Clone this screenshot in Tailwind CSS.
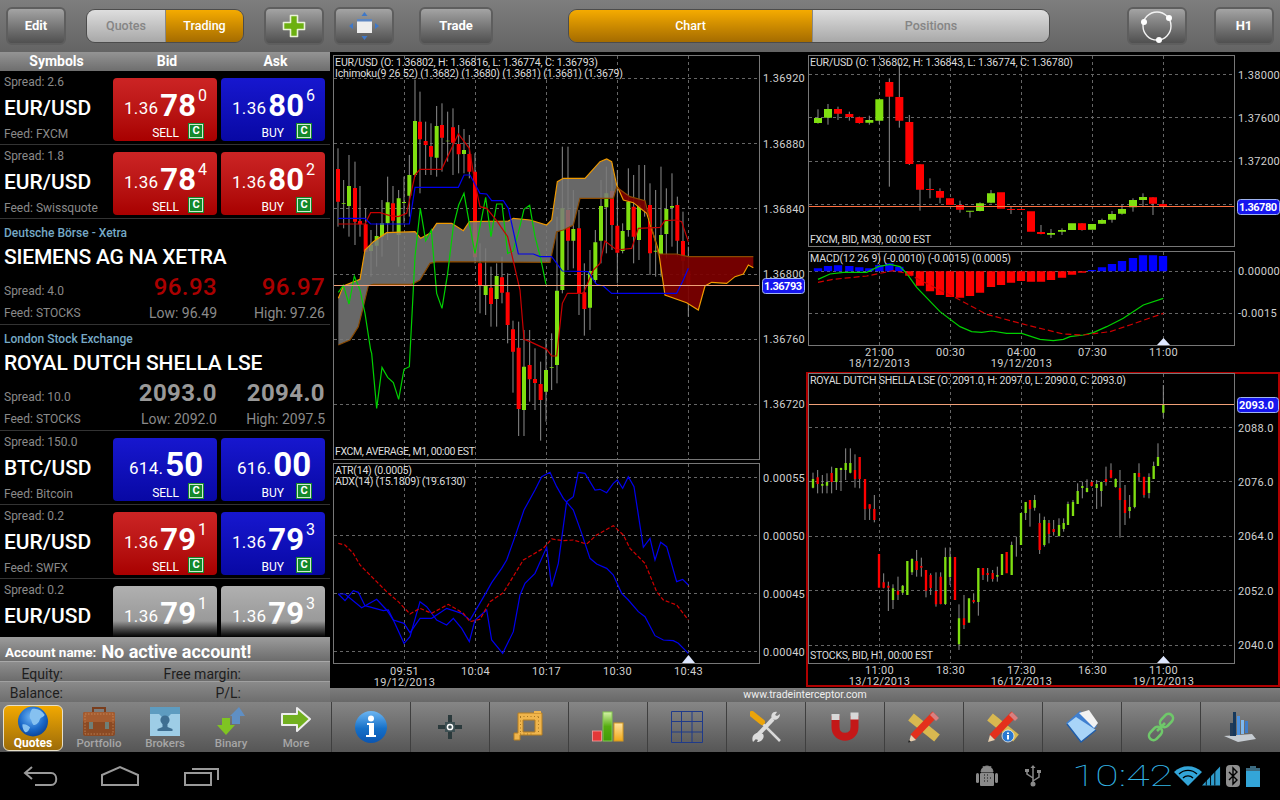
<!DOCTYPE html>
<html>
<head>
<meta charset="utf-8">
<script src="https://cdn.jsdelivr.net/npm/@tailwindcss/browser@4"></script>
</head>
<body class="bg-black [font-family:Roboto,sans-serif] overflow-hidden">
<div class="w-[1280px] h-[800px] flex flex-col overflow-hidden">

<!-- top bar -->
<div class="h-[52px] shrink-0 flex items-center pl-[6px] bg-gradient-to-b from-[#7e7e7e] to-[#646464] text-white font-bold text-[13px]">
  <div class="w-[60px] h-[38px] rounded-[6px] border-2 border-[#5e5e5e] bg-gradient-to-b from-[#a4a4a4] to-[#505050] flex items-center justify-center">Edit</div>
  <div class="ml-[20px] w-[158px] h-[34px] rounded-[9px] border border-[#4c4c4c] overflow-hidden flex font-medium text-[12.5px]">
    <div class="w-[79px] bg-gradient-to-b from-[#dedede] to-[#a8a8a8] text-[#858585] flex items-center justify-center border-r border-[#888]">Quotes</div>
    <div class="flex-1 bg-gradient-to-b from-[#f5ab00] to-[#a56c00] flex items-center justify-center">Trading</div>
  </div>
  <div class="ml-[20px] w-[60px] h-[38px] rounded-[6px] border-2 border-[#5e5e5e] bg-gradient-to-b from-[#a4a4a4] to-[#505050] flex items-center justify-center">
    <svg width="24" height="24" viewBox="0 0 24 24"><path d="M8.500 1.500h7v7h7v7h-7v7h-7v-7h-7v-7h7z" fill="#6cb010" stroke="#e9f2d8" stroke-width="1.600" stroke-linejoin="round"/></svg>
  </div>
  <div class="ml-[10px] w-[60px] h-[38px] rounded-[6px] border-2 border-[#5e5e5e] bg-gradient-to-b from-[#a4a4a4] to-[#505050] flex items-center justify-center">
    <svg width="30" height="28" viewBox="0 0 30 28"><rect x="8" y="7" width="15" height="14" fill="#eee"/><rect x="8" y="7" width="15" height="2.500" fill="#5c86c2"/><path d="M15.500 0l3 4h-6zM15.500 28l3-4h-6zM0 14l4-3v6zM30 14l-4-3v6z" fill="#3f78c8"/></svg>
  </div>
  <div class="ml-[25px] w-[74px] h-[38px] rounded-[6px] border-2 border-[#5e5e5e] bg-gradient-to-b from-[#a4a4a4] to-[#505050] flex items-center justify-center">Trade</div>
  <div class="ml-[75px] w-[482px] h-[34px] rounded-[9px] border border-[#4c4c4c] overflow-hidden flex font-medium text-[12.5px]">
    <div class="w-[243px] bg-gradient-to-b from-[#f5ab00] to-[#a56c00] flex items-center justify-center">Chart</div>
    <div class="flex-1 bg-gradient-to-b from-[#dedede] to-[#a8a8a8] text-[#858585] flex items-center justify-center border-l border-[#888]">Positions</div>
  </div>
  <div class="ml-[77px] w-[60px] h-[38px] rounded-[6px] border-2 border-[#5e5e5e] bg-gradient-to-b from-[#a4a4a4] to-[#505050] flex items-center justify-center">
    <svg width="34" height="34" viewBox="0 0 34 34"><circle cx="17" cy="17" r="14" fill="none" stroke="#f2f2f2" stroke-width="1.400"/><circle cx="4" cy="13" r="3" fill="#fff"/><circle cx="29" cy="9" r="3" fill="#fff"/><circle cx="19" cy="31" r="3" fill="#fff"/></svg>
  </div>
  <div class="ml-[27px] w-[60px] h-[38px] rounded-[6px] border-2 border-[#5e5e5e] bg-gradient-to-b from-[#a4a4a4] to-[#505050] flex items-center justify-center">H1</div>
</div>

<!-- main -->
<div class="h-[700px] shrink-0 flex">
  <!-- left column -->
  <div class="w-[330px] shrink-0 flex flex-col">
    <div class="h-[19px] shrink-0 grid grid-cols-[113px_108px_109px] bg-gradient-to-b from-[#949494] to-[#6e6e6e] text-white font-bold text-[14px] leading-[19px] text-center">
      <div>Symbols</div><div>Bid</div><div>Ask</div>
    </div>

    <div class="h-[566px] shrink-0 relative overflow-hidden bg-black">
      <!-- row 1 -->
      <div class="h-[74px] flex border-b border-[#333] pl-[4px] pt-[7px]">
        <div class="w-[109px] flex flex-col text-[12px] text-[#8a8a8a] -mt-[3px]">
          <div class="h-[15px] leading-[15px]">Spread: 2.6</div>
          <div class="h-[37px] leading-[37px] text-[21px] font-medium text-white">EUR/USD</div>
          <div class="h-[15px] leading-[15px]">Feed: FXCM</div>
        </div>
        <div class="w-[104px] h-[63px] rounded-[4px] bg-gradient-to-b from-[#cc2424] to-[#a80000] text-white mr-[4px]">
          <div class="flex items-start pl-[11px] pt-[10px] h-[44px]"><span class="text-[17px] leading-[20px] mt-[10px] tracking-[0.3px]">1.36</span><span class="text-[31px] leading-[36px] font-bold ml-[2px]">78</span><span class="text-[16px] leading-[16px] ml-[2px]">0</span></div>
          <div class="flex justify-end items-center pr-[13px] h-[17px] text-[12px] gap-[9px]"><span class="pt-[4px]">SELL</span><span class="w-[16px] h-[16px] bg-[#14892c] p-[1px] flex"><span class="flex-1 border border-[#cfe8d0] text-[11px] leading-[12px] font-bold text-center">C</span></span></div>
        </div>
        <div class="w-[104px] h-[63px] rounded-[4px] bg-gradient-to-b from-[#1717cf] to-[#0808a4] text-white">
          <div class="flex items-start pl-[11px] pt-[10px] h-[44px]"><span class="text-[17px] leading-[20px] mt-[10px] tracking-[0.3px]">1.36</span><span class="text-[31px] leading-[36px] font-bold ml-[2px]">80</span><span class="text-[16px] leading-[16px] ml-[2px]">6</span></div>
          <div class="flex justify-end items-center pr-[13px] h-[17px] text-[12px] gap-[12px]"><span class="pt-[4px]">BUY</span><span class="w-[16px] h-[16px] bg-[#14892c] p-[1px] flex"><span class="flex-1 border border-[#cfe8d0] text-[11px] leading-[12px] font-bold text-center">C</span></span></div>
        </div>
      </div>
      <!-- row 2 -->
      <div class="h-[74px] flex border-b border-[#333] pl-[4px] pt-[7px]">
        <div class="w-[109px] flex flex-col text-[12px] text-[#8a8a8a] -mt-[3px]">
          <div class="h-[15px] leading-[15px]">Spread: 1.8</div>
          <div class="h-[37px] leading-[37px] text-[21px] font-medium text-white">EUR/USD</div>
          <div class="h-[15px] leading-[15px]">Feed: Swissquote</div>
        </div>
        <div class="w-[104px] h-[63px] rounded-[4px] bg-gradient-to-b from-[#cc2424] to-[#a80000] text-white mr-[4px]">
          <div class="flex items-start pl-[11px] pt-[10px] h-[44px]"><span class="text-[17px] leading-[20px] mt-[10px] tracking-[0.3px]">1.36</span><span class="text-[31px] leading-[36px] font-bold ml-[2px]">78</span><span class="text-[16px] leading-[16px] ml-[2px]">4</span></div>
          <div class="flex justify-end items-center pr-[13px] h-[17px] text-[12px] gap-[9px]"><span class="pt-[4px]">SELL</span><span class="w-[16px] h-[16px] bg-[#14892c] p-[1px] flex"><span class="flex-1 border border-[#cfe8d0] text-[11px] leading-[12px] font-bold text-center">C</span></span></div>
        </div>
        <div class="w-[104px] h-[63px] rounded-[4px] bg-gradient-to-b from-[#cc2424] to-[#a80000] text-white">
          <div class="flex items-start pl-[11px] pt-[10px] h-[44px]"><span class="text-[17px] leading-[20px] mt-[10px] tracking-[0.3px]">1.36</span><span class="text-[31px] leading-[36px] font-bold ml-[2px]">80</span><span class="text-[16px] leading-[16px] ml-[2px]">2</span></div>
          <div class="flex justify-end items-center pr-[13px] h-[17px] text-[12px] gap-[12px]"><span class="pt-[4px]">BUY</span><span class="w-[16px] h-[16px] bg-[#14892c] p-[1px] flex"><span class="flex-1 border border-[#cfe8d0] text-[11px] leading-[12px] font-bold text-center">C</span></span></div>
        </div>
      </div>
      <!-- stock 1 -->
      <div class="h-[106px] border-b border-[#333] pl-[4px] pr-[5px] pt-[7px]">
        <div class="text-[12px] leading-[15px] font-medium text-[#76a9c6]">Deutsche Börse - Xetra</div>
        <div class="text-[21px] leading-[32px] font-medium tracking-[-0.2px] text-white">SIEMENS AG NA XETRA</div>
        <div class="grid grid-cols-[109px_104px_108px] -mt-[1px] items-end"><div class="text-[12px] text-[#8a8a8a] leading-[15px] mb-[3px]">Spread: 4.0</div><div class="text-[24px] leading-[30px] font-medium tracking-[0.4px] text-[#aa0000] text-right">96.93</div><div class="text-[24px] leading-[30px] font-medium tracking-[0.4px] text-[#aa0000] text-right">96.97</div></div>
        <div class="grid grid-cols-[109px_104px_108px] items-end mt-[3px]"><div class="text-[12px] text-[#8a8a8a] leading-[15px]">Feed: STOCKS</div><div class="text-[14px] leading-[16px] text-[#8a8a8a] text-right">Low: 96.49</div><div class="text-[14px] leading-[16px] text-[#8a8a8a] text-right">High: 97.26</div></div>
      </div>
      <!-- stock 2 -->
      <div class="h-[106px] border-b border-[#333] pl-[4px] pr-[5px] pt-[7px]">
        <div class="text-[12px] leading-[15px] font-medium text-[#76a9c6]">London Stock Exchange</div>
        <div class="text-[21px] leading-[32px] font-medium tracking-[-0.1px] text-white">ROYAL DUTCH SHELLA LSE</div>
        <div class="grid grid-cols-[109px_104px_108px] -mt-[1px] items-end"><div class="text-[12px] text-[#8a8a8a] leading-[15px] mb-[3px]">Spread: 10.0</div><div class="text-[24px] leading-[30px] font-bold tracking-[0.4px] text-[#999] text-right">2093.0</div><div class="text-[24px] leading-[30px] font-bold tracking-[0.4px] text-[#999] text-right">2094.0</div></div>
        <div class="grid grid-cols-[109px_104px_108px] items-end mt-[3px]"><div class="text-[12px] text-[#8a8a8a] leading-[15px]">Feed: STOCKS</div><div class="text-[14px] leading-[16px] text-[#8a8a8a] text-right">Low: 2092.0</div><div class="text-[14px] leading-[16px] text-[#8a8a8a] text-right">High: 2097.5</div></div>
      </div>
      <!-- row 5 -->
      <div class="h-[74px] flex border-b border-[#333] pl-[4px] pt-[7px]">
        <div class="w-[109px] flex flex-col text-[12px] text-[#8a8a8a] -mt-[3px]">
          <div class="h-[15px] leading-[15px]">Spread: 150.0</div>
          <div class="h-[37px] leading-[37px] text-[21px] font-medium text-white">BTC/USD</div>
          <div class="h-[15px] leading-[15px]">Feed: Bitcoin</div>
        </div>
        <div class="w-[104px] h-[63px] rounded-[4px] bg-gradient-to-b from-[#1717cf] to-[#0808a4] text-white mr-[4px]">
          <div class="flex items-start pl-[16px] pt-[9px] h-[44px]"><span class="text-[17px] leading-[20px] mt-[11px] tracking-[0.3px]">614.</span><span class="text-[33px] leading-[36px] font-bold ml-[2px]">50</span></div>
          <div class="flex justify-end items-center pr-[13px] h-[17px] text-[12px] gap-[9px]"><span class="pt-[4px]">SELL</span><span class="w-[16px] h-[16px] bg-[#14892c] p-[1px] flex"><span class="flex-1 border border-[#cfe8d0] text-[11px] leading-[12px] font-bold text-center">C</span></span></div>
        </div>
        <div class="w-[104px] h-[63px] rounded-[4px] bg-gradient-to-b from-[#1717cf] to-[#0808a4] text-white">
          <div class="flex items-start pl-[16px] pt-[9px] h-[44px]"><span class="text-[17px] leading-[20px] mt-[11px] tracking-[0.3px]">616.</span><span class="text-[33px] leading-[36px] font-bold ml-[2px]">00</span></div>
          <div class="flex justify-end items-center pr-[13px] h-[17px] text-[12px] gap-[12px]"><span class="pt-[4px]">BUY</span><span class="w-[16px] h-[16px] bg-[#14892c] p-[1px] flex"><span class="flex-1 border border-[#cfe8d0] text-[11px] leading-[12px] font-bold text-center">C</span></span></div>
        </div>
      </div>
      <!-- row 6 -->
      <div class="h-[74px] flex border-b border-[#333] pl-[4px] pt-[7px]">
        <div class="w-[109px] flex flex-col text-[12px] text-[#8a8a8a] -mt-[3px]">
          <div class="h-[15px] leading-[15px]">Spread: 0.2</div>
          <div class="h-[37px] leading-[37px] text-[21px] font-medium text-white">EUR/USD</div>
          <div class="h-[15px] leading-[15px]">Feed: SWFX</div>
        </div>
        <div class="w-[104px] h-[63px] rounded-[4px] bg-gradient-to-b from-[#cc2424] to-[#a80000] text-white mr-[4px]">
          <div class="flex items-start pl-[11px] pt-[10px] h-[44px]"><span class="text-[17px] leading-[20px] mt-[10px] tracking-[0.3px]">1.36</span><span class="text-[31px] leading-[36px] font-bold ml-[2px]">79</span><span class="text-[16px] leading-[16px] ml-[2px]">1</span></div>
          <div class="flex justify-end items-center pr-[13px] h-[17px] text-[12px] gap-[9px]"><span class="pt-[4px]">SELL</span><span class="w-[16px] h-[16px] bg-[#14892c] p-[1px] flex"><span class="flex-1 border border-[#cfe8d0] text-[11px] leading-[12px] font-bold text-center">C</span></span></div>
        </div>
        <div class="w-[104px] h-[63px] rounded-[4px] bg-gradient-to-b from-[#1717cf] to-[#0808a4] text-white">
          <div class="flex items-start pl-[11px] pt-[10px] h-[44px]"><span class="text-[17px] leading-[20px] mt-[10px] tracking-[0.3px]">1.36</span><span class="text-[31px] leading-[36px] font-bold ml-[2px]">79</span><span class="text-[16px] leading-[16px] ml-[2px]">3</span></div>
          <div class="flex justify-end items-center pr-[13px] h-[17px] text-[12px] gap-[12px]"><span class="pt-[4px]">BUY</span><span class="w-[16px] h-[16px] bg-[#14892c] p-[1px] flex"><span class="flex-1 border border-[#cfe8d0] text-[11px] leading-[12px] font-bold text-center">C</span></span></div>
        </div>
      </div>
      <!-- row 7 -->
      <div class="h-[74px] flex pl-[4px] pt-[7px]">
        <div class="w-[109px] flex flex-col text-[12px] text-[#8a8a8a] -mt-[3px]">
          <div class="h-[15px] leading-[15px]">Spread: 0.2</div>
          <div class="h-[37px] leading-[37px] text-[21px] font-medium text-white">EUR/USD</div>
        </div>
        <div class="w-[104px] h-[63px] rounded-[4px] bg-gradient-to-b from-[#b0b0b0] to-[#888] text-white mr-[4px]">
          <div class="flex items-start pl-[11px] pt-[10px] h-[44px]"><span class="text-[17px] leading-[20px] mt-[10px] tracking-[0.3px]">1.36</span><span class="text-[31px] leading-[36px] font-bold ml-[2px]">79</span><span class="text-[16px] leading-[16px] ml-[2px]">1</span></div>
        </div>
        <div class="w-[104px] h-[63px] rounded-[4px] bg-gradient-to-b from-[#b0b0b0] to-[#888] text-white">
          <div class="flex items-start pl-[11px] pt-[10px] h-[44px]"><span class="text-[17px] leading-[20px] mt-[10px] tracking-[0.3px]">1.36</span><span class="text-[31px] leading-[36px] font-bold ml-[2px]">79</span><span class="text-[16px] leading-[16px] ml-[2px]">3</span></div>
        </div>
      </div>
      <!-- fade over the clipped row -->
      <div class="absolute left-0 right-0 bottom-0 h-[16px] bg-gradient-to-b from-black/0 to-black"></div>
    </div>

    <!-- account -->
    <div class="h-[25px] shrink-0 flex items-center pl-[5px] pt-[4px] bg-gradient-to-b from-[#9c9c9c] to-[#6c6c6c] border-b border-[#a8a8a8] text-white font-bold">
      <span class="text-[13.5px] pt-[2px]">Account name:</span><span class="text-[18px] ml-[5px]">No active account!</span>
    </div>
    <div class="h-[20px] shrink-0 grid grid-cols-[63px_178px] bg-gradient-to-b from-[#8e8e8e] to-[#6c6c6c] border-b border-[#a0a0a0] text-[14px] leading-[24px] text-[#1e1e1e] text-right">
      <div>Equity:</div><div>Free margin:</div>
    </div>
    <div class="h-[20px] shrink-0 grid grid-cols-[63px_178px] bg-gradient-to-b from-[#8a8a8a] to-[#6e6e6e] text-[14px] leading-[22px] text-[#1e1e1e] text-right">
      <div>Balance:</div><div>P/L:</div>
    </div>

    <!-- tabs -->
    <div class="h-[50px] shrink-0 flex items-stretch pl-[3px] pt-[3px] pb-[1px] bg-gradient-to-b from-[#848484] to-[#565656] text-[11.5px] text-[#a6a6a6] font-medium">
      <div class="w-[60px] mr-[3px] rounded-[6px] border border-[#e8e0c8] bg-gradient-to-b from-[#f2a900] to-[#9d6c08] flex flex-col items-center text-white font-bold text-[12px]">
        <svg width="32" height="32" viewBox="0 0 32 32"><defs><radialGradient id="gl" cx=".45" cy=".35" r=".7"><stop offset="0" stop-color="#6fb6f5"/><stop offset=".6" stop-color="#1a68c8"/><stop offset="1" stop-color="#0a3f90"/></radialGradient></defs><circle cx="16" cy="16" r="15.500" fill="url(#gl)"/><path d="M15 3c5-1 10 1 13 6-1 3-4 2-5 5-1 4-5 7-7 5-2-3-1-4-3-6-1-3 0-7 2-10zM5 19c3-1 6 1 8 3-1 3-3 6-5 5-2-2-3-5-3-8z" fill="#86c1f0"/></svg>
        <div class="leading-[13px]">Quotes</div>
      </div>
      <div class="w-[66px] flex flex-col items-center">
        <svg width="34" height="32" viewBox="0 0 34 32"><path d="M11 7V3h12v4" fill="none" stroke="#7a3d1c" stroke-width="2"/><rect x="1" y="7" width="32" height="24" rx="2" fill="#8b4a24"/><rect x="1" y="7" width="32" height="10" rx="2" fill="#a55c30"/><rect x="3" y="9" width="28" height="20" fill="none" stroke="#d8a070" stroke-width=".6" stroke-dasharray="1.500 1.500"/><rect x="7" y="17" width="4" height="7" fill="#6f7f78"/><rect x="23" y="17" width="4" height="7" fill="#6f7f78"/></svg>
        <div class="leading-[13px]">Portfolio</div>
      </div>
      <div class="w-[66px] flex flex-col items-center">
        <svg width="32" height="32" viewBox="0 0 32 32"><path d="M1 6h30v25H1z" fill="#9ecde6"/><path d="M1 2h30v7H22l-3 3h-6l-3-3H1z" fill="#5e9cc0"/><circle cx="16" cy="15" r="4.600" fill="#3f6f92"/><path d="M13.500 19h5v3l5 2v2H8.500v-2l5-2z" fill="#3f6f92"/></svg>
        <div class="leading-[13px]">Brokers</div>
      </div>
      <div class="w-[66px] flex flex-col items-center">
        <svg width="30" height="32" viewBox="0 0 30 32"><path d="M14 11l9-9 6 9h-5v8h-8v-8z" fill="#5f8fc4"/><path d="M6 13h8v7h5l-9 10-9-10h5z" fill="#7fc422"/></svg>
        <div class="leading-[13px]">Binary</div>
      </div>
      <div class="w-[66px] flex flex-col items-center -ml-[1px]">
        <svg width="32" height="30" viewBox="0 0 32 30"><path d="M2 9h15V3l13 11-13 12v-6H2z" fill="#72b020" stroke="#eee" stroke-width="2" stroke-linejoin="round"/></svg>
        <div class="leading-[13px] mt-[2px]">More</div>
      </div>
    </div>
  </div>

  <!-- right area -->
  <div class="w-[950px] shrink-0 flex flex-col">
    <div class="h-[636px] shrink-0 flex bg-black">
      <!-- left charts -->
      <div class="w-[475px] shrink-0 flex flex-col">
        <svg class="block" width="475" height="409" viewBox="330 52 475 409" font-size="10.600" fill="#dcdcdc">
          <rect x="333.500" y="55.500" width="426" height="404" fill="none" stroke="#777"/>
          <path d="M334 78.500H759M334 143.500H759M334 208.500H759M334 274.500H759M334 339.500H759M334 404.500H759M404.500 56V459M475.500 56V459M546.500 56V459M617.500 56V459M688.500 56V459" stroke="#666" stroke-dasharray="3 3" fill="none"/>
          <g transform="translate(330 50) scale(.33333)" fill="none">
            <path stroke="#8e8e8e" stroke-width="3" d="M24 295V530M41 390V535M57 315V560M75 335V585M90 408V560M107 475V600M123 540V680M140 520V650M156 450V620M173 380V570M189 408V545M206 420V650M222 380V520M238 315V500M255 90V380M270 125V430M287 215V375M303 220V375M320 168V380M336 160V365M353 185V335M369 175V375M386 225V370M402 237V370M418 255V385M435 310V640M450 580V790M467 595V795M483 650V830M500 640V830M516 620V760M533 670V880M549 812V1028M566 815V1158M582 840V1158M599 840V1055M615 895V1080M632 935V1172M648 870V1115M665 850V1020M681 500V1000M697 290V730M714 290V660M730 420V655M747 480V795M763 640V857M780 600V840M796 540V700M813 390V640M829 350V610M846 340V600M862 360V700M878 520V610M895 355V560M911 375V640M927 345V630M944 345V500M960 400V675M977 420V680M993 350V680M1009 415V625M1026 370V590M1042 440V620M1059 485V680M1075 590V800"/>
            <path stroke="#7fdf10" stroke-width="12" d="M41 459V461M57 408V468M123 585V603M140 558V587M156 520V560M173 457V520M206 445V555M222 456V459M238 375V437M255 213V375M320 228V323M353 272V274M402 300V312M467 708V735M500 678V747M582 950V1080M648 960V1025M665 951V953M681 722V945M697 475V720M730 537V572M780 663V773M796 577V690M813 468V572M829 430V472M878 543V603M895 455V540M927 465V570M977 602V605M993 555V612M1009 477V552M1026 468V473"/>
            <path stroke="#ff0000" stroke-width="12" d="M24 357V455M75 414V515M90 513V523M107 523V605M189 460V512M270 215V268M287 273V285M303 288V320M336 225V263M369 232V278M386 282V313M418 312V365M435 365V622M450 640V707M483 713V762M516 682V728M533 727V825M549 838V905M566 893V1077M599 945V988M615 987V999M632 1002V1050M714 480V572M747 535V730M763 727V777M846 423V525M862 527V608M911 470V560M960 465V610M1042 465V572M1059 573V632M1075 662V707"/>
            <path fill="#7a7a7a" fill-opacity=".85" d="M25 745 40 708 90 688 105 600 130 575 170 548 255 545 272 565 300 550 320 520 365 520 400 542 418 515 535 513 550 505 600 510 650 525 665 510 682 395 700 385 765 385 810 335 830 327 845 335 860 408 850 445 750 445 730 525 700 540 680 545 660 637 320 635 300 640 270 690 245 703 130 703 115 707 100 770 85 830 60 870 25 885Z"/>
            <path fill="#7d0000" fill-opacity=".92" d="M860 408 880 450 910 458 950 490 985 600 1005 735 1070 758 1105 780 1125 708 1145 697 1190 700 1215 680 1240 672 1255 645 1270 653 1270 620 1075 620 1040 612 985 612 945 452 900 440Z"/>
            <path stroke="#f09a00" stroke-width="3.500" d="M25 745 40 708 90 688 105 600 130 575 170 548 255 545 272 565 300 550 320 520 365 520 400 542 418 515 535 513 550 505 600 510 650 525 665 510 682 395 700 385 765 385 810 335 830 327 845 335 860 405 880 450 910 458 950 490 985 600 1005 735 1070 758 1105 780 1125 708 1145 697 1190 700 1215 680 1240 672 1255 645 1270 653"/>
            <path stroke="#8a4a00" stroke-width="3.500" d="M25 885 60 870 85 830 100 770 115 707 130 703 245 703 270 690 300 640 320 635 660 637 680 545 700 540 730 525 750 445 850 445 860 412 900 440 945 452 985 612 1040 612 1075 620 1270 620"/>
            <path stroke="#00d000" stroke-width="3.600" d="M25 727 40 706 57 762 73 678 90 720 105 790 122 900 125 910 140 1075 156 952 173 982 190 998 206 1048 222 958 238 950 255 620 271 475 287 572 304 540 320 730 336 775 353 670 370 530 386 465 402 430 418 520 435 610 450 530 467 442 483 560 500 462 516 462 533 610 549 603 566 545 582 478 599 466 615 560 632 625 648 703"/>
            <path stroke="#c80000" stroke-width="3.600" d="M25 522 105 522 122 488 150 488 180 497 205 500 230 490 255 375 270 358 335 358 385 252 418 295 435 400 450 470 470 475 500 512 533 560 570 720 582 868 600 875 650 898 665 918 680 918 697 760 712 730 760 730 790 660 810 640 825 573 860 600 905 595 925 535 990 532 1005 512 1040 510 1055 515 1075 575"/>
            <path stroke="#0000ee" stroke-width="3.600" d="M25 505 105 505 122 522 238 522 255 412 385 412 402 375 420 375 450 430 470 432 485 452 520 452 535 475 565 612 610 612 630 620 665 620 697 663 775 665 790 690 800 703 820 708 845 730 1040 730 1060 690 1075 655"/>
          </g>
          <path d="M334 285.500H759" stroke="#f0a078"/>
          <text x="335" y="66" textLength="263">EUR/USD (O: 1.36802, H: 1.36816, L: 1.36774, C: 1.36793)</text>
          <text x="335" y="77" textLength="288">Ichimoku(9 26 52) (1.3682) (1.3680) (1.3681) (1.3681) (1.3679)</text>
          <text x="335" y="455" textLength="140">FXCM, AVERAGE, M1, 00:00 EST</text>
          <g font-size="11" letter-spacing=".3" fill="#d0d0d0"><text x="763" y="82">1.36920</text><text x="763" y="148">1.36880</text><text x="763" y="213">1.36840</text><text x="763" y="278">1.36800</text><text x="763" y="343">1.36760</text><text x="763" y="408">1.36720</text></g>
          <rect x="762.500" y="278.500" width="42" height="15" rx="3" fill="#1616ee" stroke="#9fb4f0"/>
          <text x="764" y="290" font-size="11" font-weight="700" textLength="38" fill="#fff">1.36793</text>
        </svg>
        <svg class="block" width="475" height="227" viewBox="330 461 475 227" font-size="10.600" fill="#dcdcdc">
          <rect x="333.500" y="463.500" width="426" height="200" fill="none" stroke="#777"/>
          <path d="M334 477.500H759M334 535.500H759M334 593.500H759M334 651.500H759M404.500 464V663M475.500 464V663M546.500 464V663M617.500 464V663M688.500 464V663" stroke="#666" stroke-dasharray="3 3" fill="none"/>
          <g transform="translate(330 290) scale(.33333)" fill="none">
            <path stroke="#0000ee" stroke-width="3.600" d="M25 912 45 912 95 953 140 928 170 960 190 990 222 1000 240 1028 270 985 305 985 350 955 395 970 420 990 470 905 485 878 515 835 530 810 555 740 582 660 615 600 635 560 660 547 680 590 700 625 730 660 755 730 780 805 800 822 830 835 850 855 875 910 895 930 925 965 945 980 975 1037 1000 1050 1030 1052 1045 1060 1075 1090"/>
            <path stroke="#0000ee" stroke-width="3.600" d="M25 912 45 932 70 902 85 907 105 947 160 962 175 960 190 990 222 1060 240 1040 270 935 290 950 320 990 350 1005 370 985 395 1015 418 1055 435 990 470 960 485 1050 518 1090 550 1025 570 915 585 880 615 850 650 772 665 890 685 820 710 635 730 620 745 547 765 550 795 600 810 598 830 608 850 580 862 570 878 595 895 560 912 590 940 772 960 745 975 810 992 757 1010 770 1040 875 1058 868 1075 885"/>
            <path stroke="#d00000" stroke-width="3.600" stroke-dasharray="12 6" d="M25 760 45 765 70 790 90 825 140 875 175 910 205 935 240 972 270 955 305 970 355 943 400 970 420 995 450 988 480 935 520 908 580 810 640 775 665 747 700 752 730 750 770 762 800 735 850 707 880 735 900 775 945 820 980 905 1000 930 1040 945 1075 990"/>
          </g>
          <path d="M682 663l6.500-8 6.500 8z" fill="#dfe8ff"/>
          <text x="335" y="474" textLength="77">ATR(14) (0.0005)</text>
          <text x="335" y="485" textLength="131">ADX(14) (15.1809) (19.6130)</text>
          <g font-size="11" letter-spacing=".3" fill="#d0d0d0"><text x="763" y="482">0.00055</text><text x="763" y="540">0.00050</text><text x="763" y="598">0.00045</text><text x="763" y="656">0.00040</text></g>
          <g font-size="11" letter-spacing=".3" fill="#d0d0d0" text-anchor="middle"><text x="404.500" y="675">09:51</text><text x="475.500" y="675">10:04</text><text x="546.500" y="675">10:17</text><text x="617.500" y="675">10:30</text><text x="688.500" y="675">10:43</text><text x="404.500" y="686">19/12/2013</text></g>
        </svg>
      </div>
      <!-- right charts -->
      <div class="w-[475px] shrink-0 flex flex-col">
        <svg class="block" width="475" height="197" viewBox="805 52 475 197" font-size="10.600" fill="#dcdcdc">
          <rect x="808.500" y="55.500" width="426" height="191" fill="none" stroke="#777"/>
          <path d="M809 74.500H1234M809 117.500H1234M809 161.500H1234M809 204.500H1234M879.500 56V247M950.500 56V247M1021.500 56V247M1092.500 56V247M1163.500 56V247" stroke="#666" stroke-dasharray="3 3" fill="none"/>
          <g transform="translate(800 50) scale(.33333)" fill="none">
            <path stroke="#8e8e8e" stroke-width="3" d="M54 178V221M84 162V224M114 170V210M148 185V212M178 200V221M208 197V224M238 148V222M268 85V410M298 40V233M328 195V345M360 343V482M390 385V445M420 415V460M480 452V488M510 483V503M540 457V484M573 420V460M633 470V492M723 525V553M753 537V564M786 535V555M846 520V542M906 506V522M936 483V518M966 465V494M999 445V485M1029 430V468M1059 442V495M1089 450V470"/>
            <path stroke="#7fdf10" stroke-width="24" d="M54 204V219M84 177V203M208 210V218M238 148V212M510 482V485M540 460V483M573 430V458M753 549V554M786 540V545M816 520V540M876 522V539M906 510V521M936 492V509M966 477V491M999 450V472M1029 441V450"/>
            <path stroke="#ff0000" stroke-width="24" d="M114 177V191M148 192V201M178 202V219M268 96V140M298 141V212M328 216V342M360 343V419M390 417V420M420 423V443M450 445V465M480 465V479M603 427V476M633 477V480M663 477V480M693 484V545M723 546V552M846 520V540M1059 442V461M1089 462V468"/>
          </g>
          <path d="M809 206.500H1234" stroke="#ff7040"/>
          <text x="810" y="66" textLength="263">EUR/USD (O: 1.36802, H: 1.36843, L: 1.36774, C: 1.36780)</text>
          <text x="810" y="243" textLength="121">FXCM, BID, M30, 00:00 EST</text>
          <g font-size="11" letter-spacing=".3" fill="#d0d0d0"><text x="1238" y="79">1.38000</text><text x="1238" y="122">1.37600</text><text x="1238" y="165">1.37200</text></g>
          <rect x="1237.500" y="199.500" width="42" height="15" rx="3" fill="#1616ee" stroke="#9fb4f0"/>
          <text x="1239" y="211" font-size="11" font-weight="700" textLength="38" fill="#fff">1.36780</text>
        </svg>
        <svg class="block" width="475" height="123" viewBox="805 249 475 123" font-size="10.600" fill="#dcdcdc">
          <rect x="808.500" y="251.500" width="426" height="94" fill="none" stroke="#777"/>
          <path d="M809 271.500H1234M809 313.500H1234M879.500 252V345M950.500 252V345M1021.500 252V345M1092.500 252V345M1163.500 252V345" stroke="#666" stroke-dasharray="3 3" fill="none"/>
          <g transform="translate(800 50) scale(.33333)" fill="none">
            <path stroke="#0000ff" stroke-width="25" d="M54 664V655M84 664V648M114 664V646M148 664V648M178 664V652M208 664V655M238 664V645M268 664V640M298 664V650M876 664V660M906 664V652M936 664V642M966 664V633M999 664V624M1029 664V616M1059 664V616M1089 664V618"/>
            <path stroke="#ff0000" stroke-width="25" d="M328 664V677M360 664V707M390 664V724M420 664V735M450 664V741M480 664V743M510 664V738M540 664V728M573 664V711M603 664V705M633 664V698M663 664V693M693 664V695M723 664V695M753 664V690M786 664V683M816 664V674M846 664V668"/>
            <path stroke="#00d000" stroke-width="3.600" d="M54 688 90 672 130 667 200 667 235 650 270 643 300 650 320 670 350 712 420 785 480 830 515 845 545 847 575 843 620 850 665 850 720 868 760 872 790 868 810 860 850 855 880 848 920 830 970 805 1030 765 1090 745"/>
            <path stroke="#d00000" stroke-width="3.600" stroke-dasharray="18 9" d="M54 697 100 688 200 678 280 662 320 670 400 710 470 745 560 793 680 825 790 852 850 855 930 845 990 825 1090 790"/>
          </g>
          <path d="M1157 345l6.500-7 6.500 7z" fill="#dfe8ff"/>
          <text x="810" y="262" textLength="201">MACD(12 26 9) (-0.0010) (-0.0015) (0.0005)</text>
          <g font-size="11" letter-spacing=".3" fill="#d0d0d0"><text x="1238" y="275">0.00000</text><text x="1238" y="317">-0.0015</text></g>
          <g font-size="11" letter-spacing=".3" fill="#d0d0d0" text-anchor="middle"><text x="879.500" y="356">21:00</text><text x="950.500" y="356">00:30</text><text x="1021.500" y="356">04:00</text><text x="1092.500" y="356">07:30</text><text x="1163.500" y="356">11:00</text><text x="879.500" y="367">18/12/2013</text><text x="1021.500" y="367">19/12/2013</text></g>
        </svg>
        <svg class="block" width="475" height="316" viewBox="805 372 475 316" font-size="10.600" fill="#dcdcdc">
          <rect x="807" y="373" width="472" height="313" fill="none" stroke="#b00000" stroke-width="2"/>
          <rect x="808.500" y="373.500" width="426" height="290" fill="none" stroke="#777"/>
          <path d="M809 427.500H1234M809 481.500H1234M809 536.500H1234M809 590.500H1234M809 645.500H1234M879.500 374V663M950.500 374V663M1021.500 374V663M1092.500 374V663M1163.500 374V663" stroke="#666" stroke-dasharray="3 3" fill="none"/>
          <g transform="translate(800 365) scale(.33333)" fill="none">
            <path stroke="#8e8e8e" stroke-width="3" d="M39 323V370M53 315V385M67 330V385M81 325V385M95 305V385M109 309V375M123 308V378M137 250V345M151 250V325M165 268V368M179 276V370M195 342V465M209 418V465M223 390V472M251 625V670M265 650V738M279 658V732M294 635V705M308 660V690M336 580V630M350 555V635M364 578V635M378 615V697M392 625V690M408 622V725M422 622V718M436 548V720M450 547V660M477 718V855M492 690V792M521 685V715M535 609V752M549 609V645M563 609V650M578 615V650M592 605V650M635 530V630M649 515V575M677 411V465M690 405V485M704 390V437M719 445V567M733 455V545M747 465V535M761 465V512M777 460V515M791 460V500M804 410V480M819 405V453M833 355V417M847 350V400M861 343V382M875 345V365M890 345V432M904 350V425M918 305V362M933 295V340M947 340V368M960 315V518M975 360V480M989 390V460M1004 324V430M1017 295V350M1032 335V398M1047 325V400M1061 290V342M1074 235V303M1090 60V158"/>
            <path stroke="#7fdf10" stroke-width="7" d="M39 342V368M67 357V362M81 351V362M109 309V351M123 309V315M137 294V315M151 294V323M279 670V705M308 662V683M322 588V690M336 582V622M436 576V717M450 576V636M477 760V838M507 700V773M535 609V711M592 630V635M606 567V630M635 540V630M663 444V540M677 411V444M704 405V428M733 465V540M777 480V513M791 474V492M804 417V480M819 411V453M833 378V417M847 363V369M861 369V381M890 357V369M904 351V378M947 342V366M989 426V438M1004 324V426M1047 336V384M1061 303V342M1074 276V303M1090 118V143"/>
            <path stroke="#ff0000" stroke-width="7" d="M53 337V357M95 324V351M165 315V342M179 276V342M195 342V432M209 418V431M223 432V465M237 567V668M251 652V668M265 662V668M294 677V689M350 588V615M364 603V608M378 615V677M392 630V669M408 678V718M422 635V717M465 576V705M492 760V780M521 705V711M549 609V630M563 624V630M578 624V642M620 561V625M690 405V432M719 474V555M747 474V507M761 492V501M875 351V363M918 342V351M933 315V338M960 369V405M975 405V444M1017 324V336M1032 336V390"/>
          </g>
          <path d="M809 404.500H1234" stroke="#f0a078"/>
          <path d="M1157 663l6.500-7 6.500 7z" fill="#dfe8ff"/>
          <text x="810" y="384" textLength="316">ROYAL DUTCH SHELLA LSE (O: 2091.0, H: 2097.0, L: 2090.0, C: 2093.0)</text>
          <text x="810" y="659" textLength="123">STOCKS, BID, H1, 00:00 EST</text>
          <g font-size="11" letter-spacing=".3" fill="#d0d0d0"><text x="1238" y="432">2088.0</text><text x="1238" y="486">2076.0</text><text x="1238" y="540">2064.0</text><text x="1238" y="595">2052.0</text><text x="1238" y="649">2040.0</text></g>
          <rect x="1237.500" y="397.500" width="41" height="15" rx="3" fill="#1616ee" stroke="#9fb4f0"/>
          <text x="1239" y="409" font-size="11" font-weight="700" fill="#fff">2093.0</text>
          <g font-size="11" letter-spacing=".3" fill="#d0d0d0" text-anchor="middle"><text x="879.500" y="674">11:00</text><text x="950.500" y="674">18:30</text><text x="1021.500" y="674">17:30</text><text x="1092.500" y="674">16:30</text><text x="1163.500" y="674">11:00</text><text x="879.500" y="685">13/12/2013</text><text x="1021.500" y="685">16/12/2013</text><text x="1163.500" y="685">19/12/2013</text></g>
        </svg>
      </div>
    </div>

    <!-- website strip -->
    <div class="h-[14px] shrink-0 bg-gradient-to-b from-[#7c7c7c] to-[#686868] text-[10.5px] leading-[14px] text-[#eee] text-center">www.tradeinterceptor.com</div>

    <!-- toolbar -->
    <div class="h-[50px] shrink-0 grid grid-cols-[repeat(12,79px)] bg-gradient-to-b from-[#868686] to-[#565656] pl-[1px]">
      <div class="border-l border-[#3f3f3f] flex items-center justify-center">
        <svg width="34" height="34" viewBox="0 0 34 34"><defs><linearGradient id="inf" x1="0" y1="0" x2="0" y2="1"><stop offset="0" stop-color="#6db6f2"/><stop offset=".55" stop-color="#1570c8"/><stop offset="1" stop-color="#0b55b0"/></linearGradient></defs><circle cx="17" cy="17" r="16" fill="url(#inf)"/><circle cx="17" cy="8.500" r="3" fill="#fff"/><path d="M13 13h7v12h2v2H12v-2h3V15h-2z" fill="#fff"/></svg>
      </div>
      <div class="border-l border-[#3f3f3f] flex items-center justify-center">
        <svg width="24" height="24" viewBox="0 0 24 24"><path d="M12 0v24M0 12h24" stroke="#2b3a3c" stroke-width="4"/><rect x="7" y="7" width="10" height="10" fill="#3d4f52"/><circle cx="12" cy="12" r="2.600" fill="none" stroke="#fff" stroke-width="1.500"/></svg>
      </div>
      <div class="border-l border-[#3f3f3f] flex items-center justify-center">
        <svg width="32" height="32" viewBox="0 0 32 32"><path d="M5 2H29V24H7V29H1V22H5ZM10 9V21H22V9Z" fill="#f0b54c" fill-rule="evenodd" stroke="#b57f22"/><path d="M7 5.500h20M7 23h14M7.500 6v15M25.500 6v15" stroke="#a87720" stroke-width="1" stroke-dasharray="1 2.500"/><path d="M21 0h7v2h-7z" fill="#f0b54c"/></svg>
      </div>
      <div class="border-l border-[#3f3f3f] flex items-center justify-center">
        <svg width="32" height="32" viewBox="0 0 32 32"><defs><linearGradient id="brg" x1="0" y1="0" x2="0" y2="1"><stop offset="0" stop-color="#d6f2a8"/><stop offset=".5" stop-color="#55ac10"/><stop offset="1" stop-color="#3f9a08"/></linearGradient><linearGradient id="bro" x1="0" y1="0" x2="0" y2="1"><stop offset="0" stop-color="#ffe3a0"/><stop offset="1" stop-color="#f0a818"/></linearGradient></defs><rect x=".5" y="20" width="9" height="10" fill="#e23838" stroke="#f8a0a0" stroke-width=".8"/><rect x="11" y="1" width="9" height="29" fill="url(#brg)" stroke="#84c850"/><rect x="22" y="12" width="9" height="18" fill="url(#bro)" stroke="#d49820"/></svg>
      </div>
      <div class="border-l border-[#3f3f3f] flex items-center justify-center">
        <svg width="32" height="32" viewBox="0 0 32 32"><path d="M.5.5h31v31H.5zM10.500.5v31M21 .5v31M.5 10.500h31M.5 21h31" fill="none" stroke="#1f3a8a"/></svg>
      </div>
      <div class="border-l border-[#3f3f3f] flex items-center justify-center">
        <svg width="32" height="32" viewBox="0 0 32 32"><path d="M11 11 30 30" stroke="#d9d9d9" stroke-width="2.600"/><path d="M2 3 12 11" stroke="#eba40a" stroke-width="6" stroke-linecap="round"/><path d="M5 27 23 8" stroke="#dcdcdc" stroke-width="4"/><path d="M27 1c-4-1-7 3-5 7 3 2 8 0 8-5l-3 2-2-1z" fill="#dcdcdc"/><path d="M8 22c-4 0-7 4-5 9l3-3 2 1-1 2c5 0 8-5 6-8z" fill="#dcdcdc"/></svg>
      </div>
      <div class="border-l border-[#3f3f3f] flex items-center justify-center">
        <svg width="32" height="32" viewBox="0 0 32 32"><path d="M6.500 5v11c0 13 19 13 19 0V5" fill="none" stroke="#c41818" stroke-width="8"/><path d="M2.500 3h8v6h-8zM21.500 1.500h8v7h-8z" fill="#d8d8d8"/></svg>
      </div>
      <div class="border-l border-[#3f3f3f] flex items-center justify-center">
        <svg width="32" height="32" viewBox="0 0 32 32"><path d="M3 6 29 27" stroke="#d8b850" stroke-width="9"/><path d="M27 3 5 26" stroke="#e4301c" stroke-width="7"/><path d="M25 1l6 6-3 3-6-6z" fill="#d88080"/><path d="M3 24l5 5-7 2z" fill="#e8d0b0"/><path d="M1 29l2 2-3 .5z" fill="#222"/></svg>
      </div>
      <div class="border-l border-[#3f3f3f] flex items-center justify-center">
        <svg width="32" height="32" viewBox="0 0 32 32"><path d="M3 6 29 27" stroke="#d8b850" stroke-width="9"/><path d="M27 3 5 26" stroke="#e4301c" stroke-width="7"/><path d="M25 1l6 6-3 3-6-6z" fill="#d88080"/><path d="M3 24l5 5-7 2z" fill="#e8d0b0"/><circle cx="21" cy="25" r="6" fill="#2a78d0" stroke="#fff" stroke-width=".7"/><path d="M20 21.500h2v1.500h-2zM20 24h2v4.500h-2z" fill="#fff"/></svg>
      </div>
      <div class="border-l border-[#3f3f3f] flex items-center justify-center">
        <svg width="34" height="34" viewBox="0 0 34 34"><path d="M1 13 15 1l7 6 10 9-16 16z" fill="#3f7fd0"/><path d="M14 3 24 0l9 13-4 5z" fill="#f2f2f2"/><path d="M2 14 11 7l6 4 14 9-15 12z" fill="#a8d4f8"/><path d="M2 14l14 18 15-12" fill="none" stroke="#1f5ca8" stroke-width="1.400"/></svg>
      </div>
      <div class="border-l border-[#3f3f3f] flex items-center justify-center">
        <svg width="30" height="30" viewBox="0 0 30 30" fill="none" stroke="#6fc86a" stroke-width="2.600"><rect x="16" y="1" width="9" height="15" rx="4.500" transform="rotate(42 20.500 8.500)"/><rect x="5" y="14" width="9" height="15" rx="4.500" transform="rotate(42 9.500 21.500)"/><path d="M11 19l8-8"/></svg>
      </div>
      <div class="border-l border-[#3f3f3f] flex items-center justify-center">
        <svg width="32" height="32" viewBox="0 0 32 32"><path d="M0 25l28-2 4 5-18 3z" fill="#c6ccd2"/><path d="M6 12h3v13H6z" fill="#233c58"/><path d="M9 1h3v24H9z" fill="#16385c"/><path d="M13 5h3v19h-3z" fill="#4c92e0"/><path d="M17 9h3v14h-3z" fill="#7eb8f0"/><path d="M21 10h3v12h-3z" fill="#3f7cc8"/></svg>
      </div>
    </div>
  </div>
</div>

<!-- system bar -->
<div class="h-[48px] shrink-0 bg-black flex items-center">
  <svg class="ml-[23px]" width="36" height="22" viewBox="0 0 36 22"><path d="M9 2 2 8l7 6M3 8h25c7 0 7 12 0 12H12" fill="none" stroke="#9a9a9a" stroke-width="2"/></svg>
  <svg class="ml-[42px]" width="38" height="22" viewBox="0 0 38 22"><path d="M1 10 19 2l18 8v10H1z" fill="none" stroke="#9a9a9a" stroke-width="2"/></svg>
  <svg class="ml-[45px]" width="36" height="22" viewBox="0 0 36 22"><path d="M1 8h26v12H1zM8 4h26v11" fill="none" stroke="#9a9a9a" stroke-width="2"/></svg>
  <svg class="ml-[756px]" width="22" height="24" viewBox="0 0 22 24"><path d="M5 8a6 6 0 0 1 12 0zM7 2l1 2M15 2l-1 2" fill="#8a8a8a" stroke="#8a8a8a"/><rect x="4" y="9" width="14" height="13" rx="1" fill="#8a8a8a"/><rect x="0" y="9" width="3" height="10" rx="1.500" fill="#8a8a8a"/><rect x="19" y="9" width="3" height="10" rx="1.500" fill="#8a8a8a"/><path d="M8 11h1M11 11h1M8 14h1M11 14h1M14 14h1M8 17h1M11 17h1" stroke="#111" stroke-width="1.200"/></svg>
  <svg class="ml-[27px]" width="16" height="22" viewBox="0 0 16 22"><path d="M8 2v17M8 13 2 9V6M8 16l6-4V8" fill="none" stroke="#8a8a8a" stroke-width="1.500"/><circle cx="8" cy="19" r="2.500" fill="#8a8a8a"/><path d="M8 0l2.500 3h-5z" fill="#8a8a8a"/><rect x="0" y="4" width="4" height="3" fill="#8a8a8a"/><rect x="12" y="5" width="4" height="3" fill="#8a8a8a"/></svg>
  <div class="ml-[31px] w-[100px] text-[30px] leading-[30px] font-thin text-[#33b5e5] scale-x-[1.42] origin-left">10:42</div>
  <svg class="ml-[2px]" width="28" height="20" viewBox="0 0 28 20"><path d="M0 6a20 20 0 0 1 28 0L14 20z" fill="#33a5d8"/><path d="M5 8a13 13 0 0 1 18 0M9 12a7 7 0 0 1 10 0" fill="none" stroke="#000" stroke-width="1.300"/></svg>
  <svg width="19" height="22" viewBox="0 0 20 22"><path d="M0 21 19 1v20z" fill="#2f9ccc"/><path d="M4.500 21V14M9 21V9M13.500 21V4" stroke="#000"/></svg>
  <svg class="ml-[5px]" width="14" height="22" viewBox="0 0 14 22"><rect width="14" height="22" rx="4" fill="#8e8e8e"/><path d="M3 7l8 8-4 4V3l4 4-8 8" fill="none" stroke="#000" stroke-width="1.400"/></svg>
  <svg class="ml-[6px]" width="14" height="21" viewBox="0 0 14 21"><rect x="4" y="0" width="6" height="2" fill="#3b6a80"/><rect x="0" y="2" width="14" height="3" fill="#3b6a80"/><rect x="0" y="5" width="14" height="16" fill="#33a5d8"/></svg>
</div>
</div>
</body>
</html>
